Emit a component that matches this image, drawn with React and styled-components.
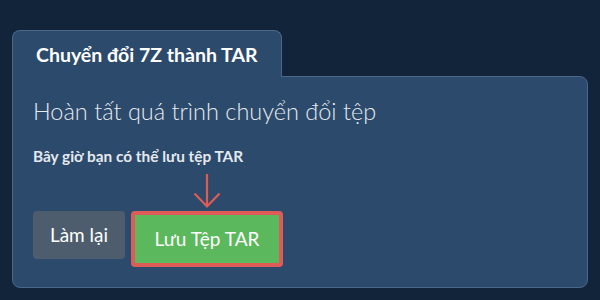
import styled, { createGlobalStyle } from "styled-components";

const GlobalStyle = createGlobalStyle`
    html, body {
        margin: 0;
        padding: 0;
        background-color: #12243a;
        font-family: Lato, "Noto Sans", sans-serif;
    }
`;

export default function App() {
    return (
        <Page>
            <GlobalStyle />
            <Tab>Chuyển đổi 7Z thành TAR</Tab>
            <Panel>
                <Heading>Hoàn tất quá trình chuyển đổi tệp</Heading>
                <Hint>Bây giờ bạn có thể lưu tệp TAR</Hint>
                <ButtonRow>
                    <RedoButton>Làm lại</RedoButton>
                    <SaveWrapper>
                        <Arrow width="28" height="36" viewBox="0 0 28 36">
                            <path d="M14 1 V34 M1.5 20.5 L14 33.5 L26.5 20.5" />
                        </Arrow>
                        <SaveButton>Lưu Tệp TAR</SaveButton>
                    </SaveWrapper>
                </ButtonRow>
            </Panel>
        </Page>
    );
}

const Page = styled.div`
    padding: 30px 12px 13px 12px;
    display: flex;
    flex-direction: column;
    align-items: flex-start;
`;

const Tab = styled.div`
    position: relative;
    z-index: 1;
    height: 46px;
    padding: 0 23px 0 23px;
    display: flex;
    align-items: center;
    background-color: #2c4a6b;
    border: 1px solid #4a6688;
    border-bottom: none;
    border-radius: 8px 8px 0 0;
    margin-bottom: -1px;
    color: #ffffff;
    font-size: 19.5px;
    font-weight: 700;
`;

const Panel = styled.div`
    align-self: stretch;
    background-color: #2c4a6b;
    border: 1px solid #4a6688;
    border-radius: 0 8px 8px 8px;
    padding: 20px 20px 20px 20px;
`;

const Heading = styled.h1`
    margin: 0;
    font-size: 23.5px;
    font-weight: 300;
    line-height: 1.2;
    color: #e4e9ef;
`;

const Hint = styled.p`
    margin: 22px 0 0 0;
    font-size: 15.4px;
    font-weight: 700;
    line-height: 1.2;
    color: #e4e9ef;
`;

const ButtonRow = styled.div`
    display: flex;
    align-items: flex-start;
    gap: 6px;
    margin-top: 45px;
`;

const Button = styled.button`
    border: none;
    padding: 0;
    font-family: Lato, "Noto Sans", sans-serif;
    font-size: 19px;
    color: #ffffff;
    cursor: pointer;
    display: flex;
    justify-content: center;
    align-items: center;
`;

const RedoButton = styled(Button)`
    width: 92px;
    height: 48px;
    background-color: #4d5d6e;
    border-radius: 4px;
`;

const SaveWrapper = styled.div`
    position: relative;
`;

const SaveButton = styled(Button)`
    width: 152px;
    height: 56px;
    background-color: #5cb85c;
    border: 4px solid #de5c58;
    border-radius: 4px;
`;

const Arrow = styled.svg`
    position: absolute;
    left: 50%;
    bottom: 100%;
    margin-bottom: 2px;
    transform: translateX(-50%);
    fill: none;
    stroke: #e05a56;
    stroke-width: 2.2;
`;
